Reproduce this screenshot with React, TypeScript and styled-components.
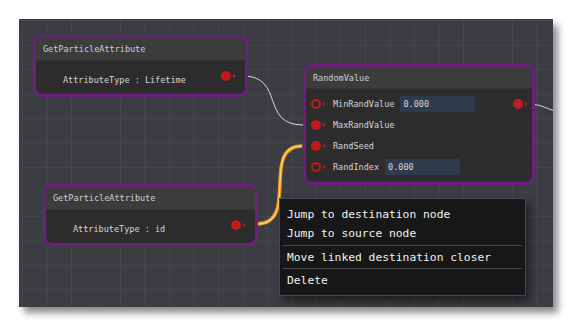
import React from "react";
import styled, { createGlobalStyle } from "styled-components";

const GlobalStyle = createGlobalStyle`
  html, body {
    margin: 0;
    padding: 0;
    background: #ffffff;
  }
  body {
    font-family: "DejaVu Sans Mono", "Liberation Mono", monospace;
  }
`;

const Page = styled.div`
  padding: 19px;
`;

const Canvas = styled.div`
  position: relative;
  width: 534px;
  height: 288px;
  overflow: hidden;
  background-color: #3c3d43;
  background-image: linear-gradient(to right, rgba(255, 255, 255, 0.045) 1px, transparent 1px),
    linear-gradient(to bottom, rgba(255, 255, 255, 0.045) 1px, transparent 1px);
  background-size: 24.5px 24.5px;
  background-position: 3px 1px;
  box-shadow: 5px 6px 7px rgba(0, 0, 0, 0.45);
`;

const WireLayer = styled.svg`
  position: absolute;
  left: 0;
  top: 0;
  width: 534px;
  height: 288px;
`;

// graph nodes sit on a free canvas
const Node = styled.div<{ $x: number; $y: number; $w: number }>`
  position: absolute;
  left: ${(p) => p.$x}px;
  top: ${(p) => p.$y}px;
  width: ${(p) => p.$w}px;
  box-sizing: border-box;
  border: 3px solid #6c1f7c;
  border-radius: 9px;
  overflow: hidden;
  background: #2c2c2d;
  display: flex;
  flex-direction: column;
`;

const NodeHeader = styled.div<{ $h: number }>`
  height: ${(p) => p.$h}px;
  box-sizing: border-box;
  display: flex;
  align-items: center;
  padding-left: 7px;
  background: #3c3c3d;
  border-bottom: 1px solid #333334;
  color: #cfcfcf;
  font-size: 8.5px;
`;

const AttrBody = styled.div`
  height: 33px;
  box-sizing: border-box;
  display: flex;
  align-items: flex-start;
  justify-content: space-between;
  padding: 10px 9px 0 27px;
`;

const AttrLabel = styled.span`
  margin-top: 4px;
  line-height: 10px;
  font-size: 8.5px;
  color: #d6d6d6;
  white-space: pre;
`;

const RowsBody = styled.div`
  display: flex;
  flex-direction: column;
  padding: 4.5px 0;
`;

const PortRow = styled.div`
  height: 21px;
  display: flex;
  align-items: center;
  padding-left: 5px;
  padding-right: 4px;
  font-size: 8.5px;
  color: #d6d6d6;
`;

const PortWrap = styled.div<{ $right?: boolean }>`
  display: flex;
  align-items: center;
  gap: 2px;
  margin-left: ${(p) => (p.$right ? "auto" : "0")};
`;

const Dot = styled.span<{ $filled: boolean }>`
  width: 10px;
  height: 10px;
  box-sizing: border-box;
  border-radius: 50%;
  border: 2px solid #c11a1f;
  background: ${(p) => (p.$filled ? "#c11a1f" : "#2c2c2d")};
`;

const Arrow = styled.span`
  width: 0;
  height: 0;
  border-top: 2.5px solid transparent;
  border-bottom: 2.5px solid transparent;
  border-left: 3px solid #c11a1f;
`;

const PortLabel = styled.span`
  margin-left: 7px;
  line-height: 10px;
`;

const ValueField = styled.span`
  margin-left: 6px;
  width: 75px;
  height: 16px;
  box-sizing: border-box;
  padding-left: 3px;
  display: flex;
  align-items: center;
  background: #2f3a4c;
  color: #d8d8d8;
`;

const Menu = styled.div`
  position: absolute;
  left: 260px;
  top: 179px;
  width: 247px;
  box-sizing: border-box;
  padding: 6px 3px 5px;
  background: #171717;
  border: 1px solid #46474b;
  box-shadow: 4px 5px 8px rgba(0, 0, 0, 0.5);
  display: flex;
  flex-direction: column;
`;

const MenuItem = styled.div`
  height: 19px;
  display: flex;
  align-items: center;
  padding-left: 4px;
  font-size: 11.3px;
  color: #f2f2f2;
  white-space: pre;
`;

const MenuDivider = styled.div`
  height: 1px;
  margin: 1.5px 0 2px;
  background: #4a4a4c;
`;

const Port: React.FC<{ filled: boolean; right?: boolean }> = ({ filled, right }) => (
  <PortWrap $right={right}>
    <Dot $filled={filled} />
    <Arrow />
  </PortWrap>
);

const AttributeNode: React.FC<{ x: number; y: number; value: string }> = ({ x, y, value }) => (
  <Node $x={x} $y={y} $w={215}>
    <NodeHeader $h={23}>GetParticleAttribute</NodeHeader>
    <AttrBody>
      <AttrLabel>{`AttributeType : ${value}`}</AttrLabel>
      <Port filled />
    </AttrBody>
  </Node>
);

const randomRows = [
  { label: "MinRandValue", filled: false, value: "0.000", output: true },
  { label: "MaxRandValue", filled: true },
  { label: "RandSeed", filled: true },
  { label: "RandIndex", filled: false, value: "0.000" },
];

const App: React.FC = () => {
  return (
    <Page>
      <GlobalStyle />
      <Canvas>
        <WireLayer viewBox="0 0 534 288">
          <path d="M224 57 C 266 57, 241 106, 284 106" fill="none" stroke="#d9d9d9" strokeWidth="1" />
          <path d="M509 85 C 526 85, 529 93, 560 98" fill="none" stroke="#d9d9d9" strokeWidth="1" />
          <rect x="232" y="203.5" width="6" height="3" fill="#5b5650" />
          <rect x="281" y="125.5" width="4" height="3" fill="#5b5650" />
          <path d="M238 205 C 281 205, 241 127, 283 127" fill="none" stroke="#e99a1e" strokeWidth="3.6" />
          <path d="M238 205 C 281 205, 241 127, 283 127" fill="none" stroke="#ffd98a" strokeWidth="1.1" />
        </WireLayer>

        <AttributeNode x={14} y={16} value="Lifetime" />

        <Node $x={284} $y={45} $w={232}>
          <NodeHeader $h={22}>RandomValue</NodeHeader>
          <RowsBody>
            {randomRows.map((r) => (
              <PortRow key={r.label}>
                <Port filled={r.filled} />
                <PortLabel>{r.label}</PortLabel>
                {r.value && <ValueField>{r.value}</ValueField>}
                {r.output && <Port filled right />}
              </PortRow>
            ))}
          </RowsBody>
        </Node>

        <AttributeNode x={24} y={165} value="id" />

        <Menu>
          <MenuItem>Jump to destination node</MenuItem>
          <MenuItem>Jump to source node</MenuItem>
          <MenuDivider />
          <MenuItem>Move linked destination closer</MenuItem>
          <MenuDivider />
          <MenuItem>Delete</MenuItem>
        </Menu>
      </Canvas>
    </Page>
  );
};

export default App;
